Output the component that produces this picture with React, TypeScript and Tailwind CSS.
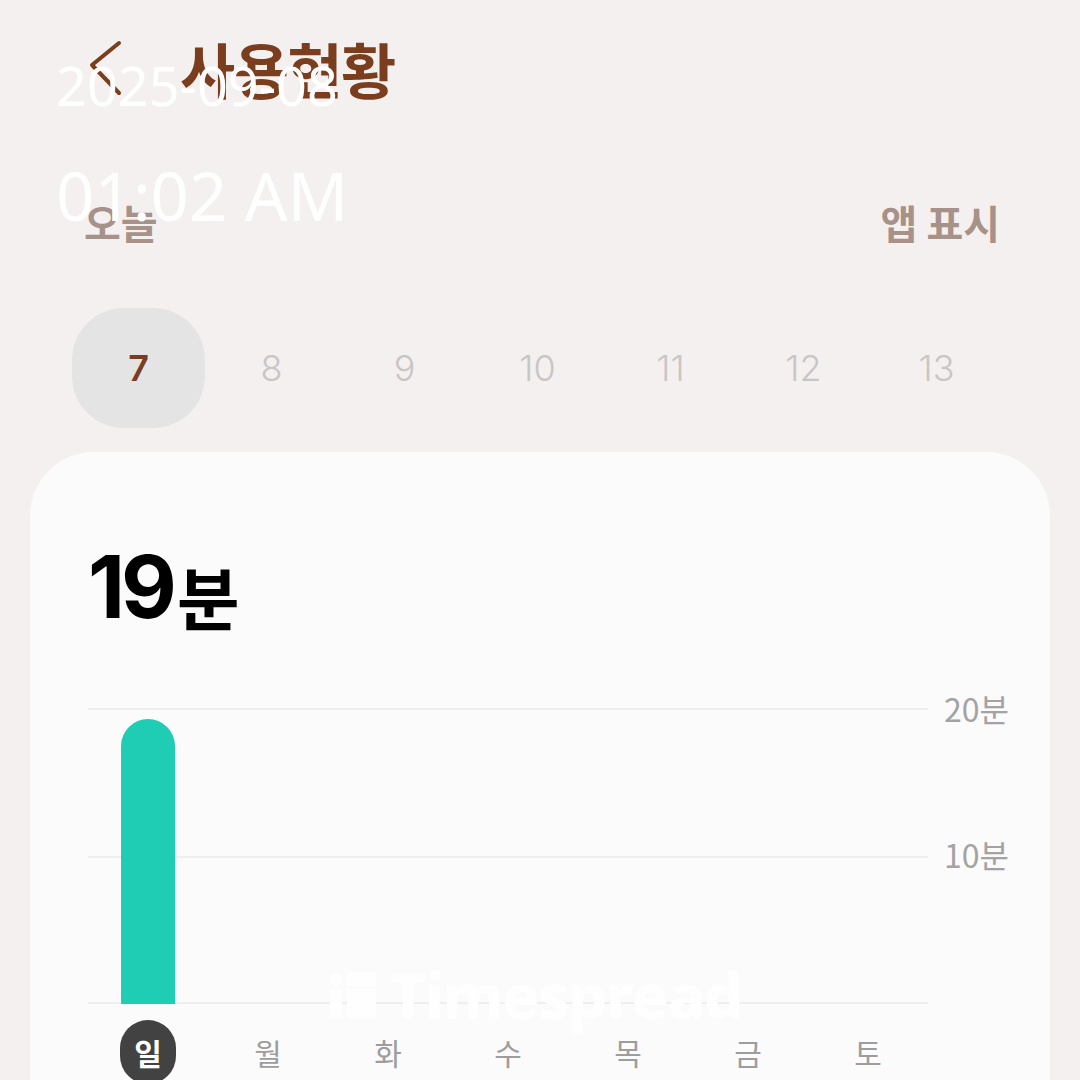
const dates = [7, 8, 9, 10, 11, 12, 13];
const days = ["일", "월", "화", "수", "목", "금", "토"];

function TimespreadMark() {
  return (
    <div className="flex items-center gap-[14px] text-white opacity-95">
      <svg width="46" height="46" viewBox="0 0 46 46">
        <circle cx="6" cy="7" r="6" fill="#ffffff" />
        <rect x="0" y="17" width="12" height="29" fill="#ffffff" />
        <rect x="17" y="0" width="29" height="14" fill="#ffffff" />
        <rect x="17" y="17" width="29" height="29" fill="#ffffff" />
      </svg>
      <span className="text-[62px] font-extrabold leading-none tracking-tight">Timespread</span>
    </div>
  );
}

function App() {
  return (
    <div
      className="relative h-[1080px] w-[1080px] overflow-hidden bg-[#f4f0ef]"
      style={{ fontFamily: '"Noto Sans", "Noto Sans CJK KR", sans-serif' }}
    >
      {/* header */}
      <div className="flex items-center pl-[88px] pt-[38px]">
        <svg width="36" height="60" viewBox="0 0 36 60" className="text-[#7a3e1f]">
          <path d="M31 5 L4 27 L31 55" fill="none" stroke="currentColor" strokeWidth="4" strokeLinecap="round" strokeLinejoin="round" />
        </svg>
        <h1
          className="ml-[56px] text-[60px] font-bold leading-none tracking-tight text-[#7a3e1f]"
          style={{ fontFamily: '"Noto Sans CJK KR", sans-serif' }}
        >
          사용현황
        </h1>
      </div>

      {/* today / app toggle */}
      <div
        className="mt-[104px] flex items-center justify-between pl-[84px] pr-[80px] text-[40px] font-bold leading-none text-[#a7928a]"
        style={{ fontFamily: '"Noto Sans CJK KR", sans-serif' }}
      >
        <span>오늘</span>
        <span>앱 표시</span>
      </div>

      {/* date strip */}
      <div className="ml-[72px] mt-[66px] grid w-[931px] grid-cols-7">
        {dates.map((d, i) => (
          <div
            key={d}
            className={
              i === 0
                ? "flex h-[120px] items-center justify-center rounded-[52px] bg-[#e5e4e5] text-[36px] font-semibold text-[#7a3e1f]"
                : "flex h-[120px] items-center justify-center text-[36px] font-light text-[#c9c5c5]"
            }
            style={{ fontFamily: "Inter, sans-serif" }}
          >
            {d}
          </div>
        ))}
      </div>

      {/* card */}
      <div className="mx-[30px] mt-[24px] h-[700px] rounded-[64px] bg-[#fbfbfb] pl-[58px] pt-[92px]">
        <div className="flex items-end leading-none text-black">
          <span className="text-[86px] font-bold tracking-[-4px]" style={{ fontFamily: "Inter, sans-serif" }}>
            19
          </span>
          <span
            className="ml-[4px] text-[68px] font-bold"
            style={{ fontFamily: '"Noto Sans CJK KR", sans-serif' }}
          >
            분
          </span>
        </div>

        {/* chart */}
        <div className="relative mt-[78px] w-[932px]">
          <div className="flex h-[296px]">
            <div className="relative w-[840px]">
              <div className="absolute left-0 right-0 top-0 border-t-2 border-[#efefef]" />
              <div className="absolute left-0 right-0 top-[148px] border-t-2 border-[#efefef]" />
              <div className="absolute bottom-0 left-0 right-0 border-t-2 border-[#efefef]" />
              <div className="relative grid h-full grid-cols-7 items-end">
                <div className="flex justify-center">
                  <div className="h-[285px] w-[54px] rounded-t-full bg-[#1fcdb5]" />
                </div>
              </div>
            </div>
            <div
              className="ml-[16px] flex flex-col text-[32px] leading-none text-[#a3a3a3]"
              style={{ fontFamily: '"Noto Sans CJK KR", sans-serif' }}
            >
              <span className="-mt-[16px]">20분</span>
              <span className="mt-[114px]">10분</span>
            </div>
          </div>

          <div
            className="mt-[16px] grid w-[840px] grid-cols-7 text-[30px] leading-none text-[#9d9d9d]"
            style={{ fontFamily: '"Noto Sans CJK KR", sans-serif' }}
          >
            {days.map((d, i) => (
              <div key={d} className="flex justify-center">
                {i === 0 ? (
                  <span className="flex h-[64px] w-[56px] items-center justify-center rounded-full bg-[#424242] font-bold text-white">
                    {d}
                  </span>
                ) : (
                  <span className="flex h-[64px] items-center">{d}</span>
                )}
              </div>
            ))}
          </div>

          <div className="absolute left-[242px] top-[256px]">
            <TimespreadMark />
          </div>
        </div>
      </div>

      {/* timestamp overlay */}
      <div
        className="absolute left-[56px] top-[58px] text-white"
        style={{ fontFamily: '"Noto Sans", sans-serif' }}
      >
        <div className="text-[54px] leading-none">2025-09-08</div>
        <div className="mt-[50px] text-[67px] leading-none">01:02 AM</div>
      </div>
    </div>
  );
}

export default App;
